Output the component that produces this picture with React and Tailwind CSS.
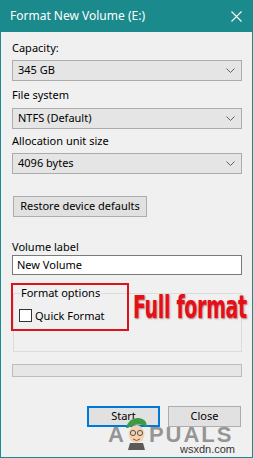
import React from "react";

const Chevron = () => (
  <svg width="9" height="5" viewBox="0 0 9 5" className="shrink-0">
    <path d="M0.5 0.5 L4.5 4.5 L8.5 0.5" fill="none" stroke="#606060" strokeWidth="1" />
  </svg>
);

const Combo = ({ value }) => (
  <div className="h-[21px] w-[230px] bg-[#e5e5e5] border border-[#acacac] flex items-center justify-between pl-[5px] pr-[6px]">
    <span>{value}</span>
    <Chevron />
  </div>
);

const Label = ({ children, className }) => (
  <div className={"h-[16px] leading-[16px] " + (className || "")}>{children}</div>
);

export default function App() {
  return (
    <div
      className="relative w-[253px] h-[458px] bg-[#1a8a8c] flex flex-col px-px pb-px text-[11px] text-black overflow-hidden"
      style={{ fontFamily: '"Noto Sans", "Open Sans", sans-serif' }}
    >
      <div className="h-[32px] shrink-0 flex items-center justify-between pl-[9px] pr-[10px] text-white text-[12px]">
        <span>Format New Volume (E:)</span>
        <svg width="11" height="11" viewBox="0 0 11 11">
          <path d="M0.5 0.5 L10.5 10.5 M10.5 0.5 L0.5 10.5" stroke="#fff" strokeWidth="1.1" />
        </svg>
      </div>
      <div className="flex-1 bg-[#f0f0f0] pl-[11px] pr-[10px] flex flex-col">
        <Label className="mt-[8px]">Capacity:</Label>
        <div className="mt-[4px]"><Combo value="345 GB" /></div>
        <Label className="mt-[6px]">File system</Label>
        <div className="mt-[5px]"><Combo value="NTFS (Default)" /></div>
        <Label className="mt-[4px]">Allocation unit size</Label>
        <div className="mt-[4px]"><Combo value="4096 bytes" /></div>
        <div className="mt-[22px] ml-px w-[134px] h-[21px] bg-[#e1e1e1] border border-[#adadad] flex items-center justify-center">
          Restore device defaults
        </div>
        <Label className="mt-[22px]">Volume label</Label>
        <div className="mt-0 w-[230px] h-[20px] bg-white border border-[#7a7a7a] flex items-center pl-[4px]">
          New Volume
        </div>
        <fieldset className="mt-[10px] ml-px w-[229px] h-[67px] border border-[#dcdcdc]">
          <legend className="ml-[6px] px-px leading-[16px]">Format options</legend>
          <div className="mt-[7px] pl-[5px] flex items-center gap-[3px]">
            <div className="w-[13px] h-[13px] bg-white border border-[#333333]" />
            <span className="leading-[15px]">Quick Format</span>
          </div>
        </fieldset>
        <div className="mt-[12px] w-[230px] h-[13px] bg-[#e6e6e6] border border-[#bcbcbc]" />
        <div className="mt-[29px] flex justify-end gap-[8px] pr-[1px]">
          <div className="w-[73px] h-[21px] bg-[#e1e1e1] border-2 border-[#0078d7] flex items-center justify-center">Start</div>
          <div className="w-[73px] h-[21px] bg-[#e1e1e1] border border-[#adadad] flex items-center justify-center">Close</div>
        </div>
      </div>

      {/* annotation overlay */}
      <div className="absolute left-[11px] top-[283px] w-[118px] h-[48px] border-2 border-[#d9141c]" />
      <div
        className="absolute left-[133px] top-[290px] text-[32px] leading-[34px] font-bold text-[#e3101a] tracking-[-0.5px] origin-left scale-x-[0.66] whitespace-nowrap [text-shadow:1px_1px_2px_rgba(120,0,0,0.5)]"
        style={{ fontFamily: '"DejaVu Sans Condensed", "DejaVu Sans", sans-serif' }}
      >
        Full format
      </div>

      {/* watermark */}
      <div className="absolute left-[108px] top-[416px] flex items-end pointer-events-none">
        <span className="text-[22px] leading-[16px] font-bold text-[#7c7c7c]/80" style={{ fontFamily: '"Liberation Sans", sans-serif' }}>A</span>
        <svg width="27" height="34" viewBox="0 0 27 34" className="mx-[-1px] mb-[-7px]">
          <path d="M3 12 Q6 1 16 2 Q24 3 24 11 L20 9 Q12 7 5 12 Z" fill="#3f9a44" />
          <ellipse cx="13.5" cy="18" rx="8" ry="9" fill="#f2d2b0" />
          <circle cx="10" cy="17" r="2.6" fill="none" stroke="#555" strokeWidth="1" />
          <circle cx="17" cy="17" r="2.6" fill="none" stroke="#555" strokeWidth="1" />
          <path d="M10 23 Q13.5 26 17 23" fill="none" stroke="#a05030" strokeWidth="1" />
          <path d="M7 27 L20 27 L22 34 L5 34 Z" fill="#5a5a5a" />
        </svg>
        <span className="text-[22px] leading-[16px] font-bold text-[#7c7c7c]/80 tracking-[2px]" style={{ fontFamily: '"Liberation Sans", sans-serif' }}>PUALS</span>
      </div>
      <div className="absolute left-[180px] top-[443px] text-[11px] leading-[13px] text-[#333]" style={{ fontFamily: '"Liberation Sans", sans-serif' }}>
        wsxdn.com
      </div>
    </div>
  );
}
